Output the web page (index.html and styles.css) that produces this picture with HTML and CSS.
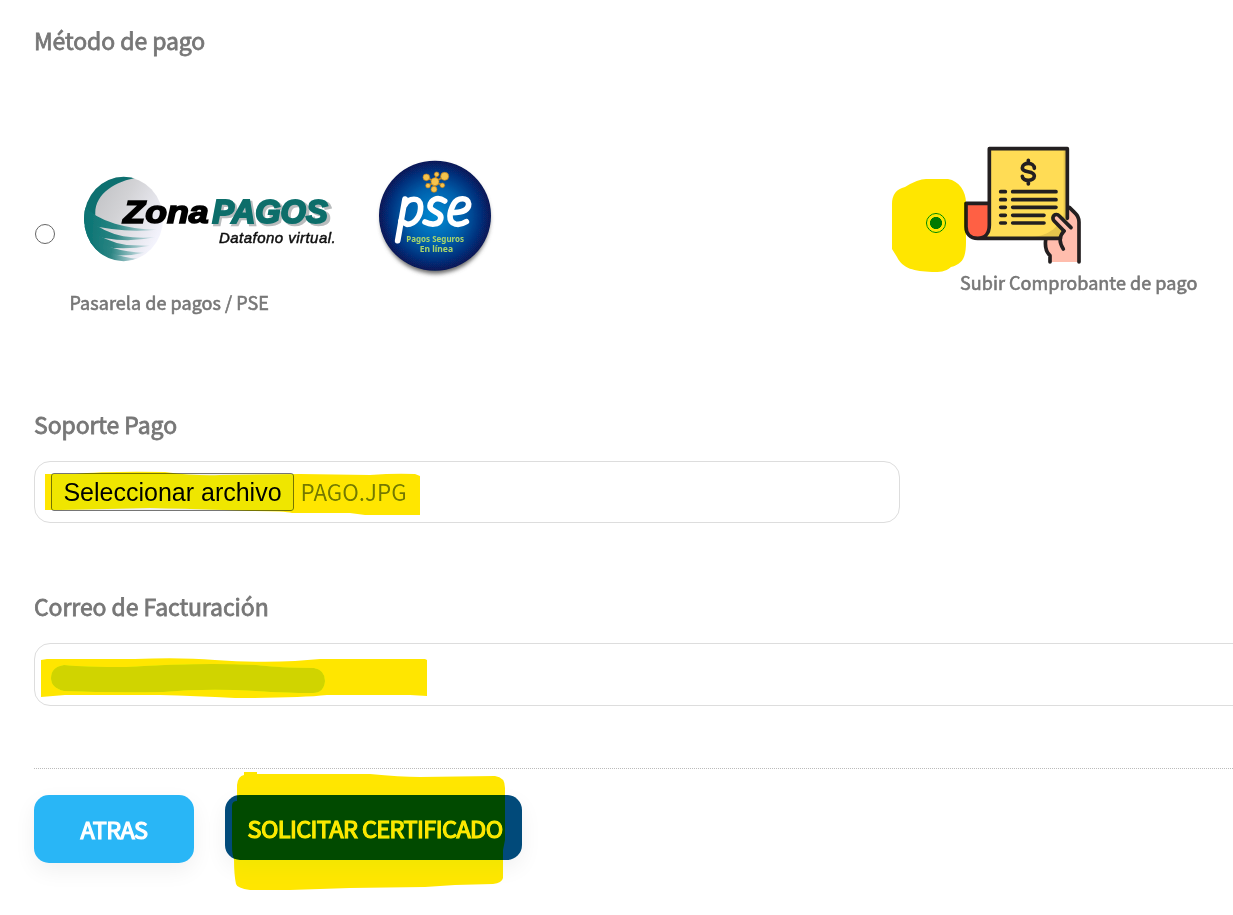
FILE: index.html
```html
<!DOCTYPE html>
<html lang="es">
<head>
<meta charset="utf-8">
<title>Método de pago</title>
<link rel="stylesheet" href="styles.css">
</head>
<body>
<main class="page">
  <h2 class="label">Método de pago</h2>
  <div class="methods">
    <label class="method method-gateway">
      <span class="radio"></span>
      <span class="method-body">
        <span class="logos">
          <svg class="zona" viewBox="180 70 801 282">
            <defs>
              <linearGradient id="ball" x1="0" y1="0" x2="1" y2="0.6"><stop offset="0" stop-color="#b9bbbe"/><stop offset=".5" stop-color="#d2d2d5"/><stop offset="1" stop-color="#f3f3fc"/></linearGradient>
              <linearGradient id="teal" x1="0" y1="0" x2="1" y2="0"><stop offset="0" stop-color="#067272"/><stop offset=".45" stop-color="#2b8583"/><stop offset="1" stop-color="#d9e5ec"/></linearGradient>
              <clipPath id="ballclip"><ellipse cx="311" cy="208" rx="119" ry="127"/></clipPath>
              <filter id="soft" x="-10%" y="-10%" width="120%" height="120%"><feGaussianBlur stdDeviation="2"/></filter>
              <filter id="edge"><feGaussianBlur stdDeviation="1.1"/></filter>
            </defs>
            <g filter="url(#soft)">
              <ellipse cx="311" cy="208" rx="118" ry="126" fill="url(#ball)"/>
              <g clip-path="url(#ballclip)" fill="url(#teal)">
                <path fill="#11706f" d="M355 84C285 92 222 135 226 195L185 220V76H355z"/>
                <path d="M190 165Q220 203 285 222Q340 238 410 240Q310 252 190 222z"/>
                <path d="M190 200Q250 249 310 260Q350 266 405 263Q300 285 190 250z"/>
                <path d="M190 228Q260 278 320 286L390 288Q290 307 200 280z"/>
                <path d="M194 252Q270 307 373 309Q290 328 215 306z"/>
                <path d="M205 274Q275 322 355 327L310 338Q250 332 212 310z"/>
              </g>
            </g>
            <g class="logo-bold" filter="url(#edge)">
              <text x="310" y="221" font-size="95" textLength="256" lengthAdjust="spacingAndGlyphs" stroke="#000" stroke-width="5">Zona</text>
              <text x="582" y="226" font-size="98" textLength="350" lengthAdjust="spacingAndGlyphs" fill="#b9bcbd" stroke="#b9bcbd" stroke-width="8">PAGOS</text>
              <text x="577" y="220" font-size="98" textLength="346" lengthAdjust="spacingAndGlyphs" fill="#086e6b" stroke="#086e6b" stroke-width="6">PAGOS</text>
              <text class="logo-light" x="597" y="280" font-size="45" textLength="350">Datafono virtual.</text>
            </g>
          </svg>
          <svg class="pse" viewBox="0 0 450 405">
            <defs>
              <radialGradient id="blue"><stop offset="0" stop-color="#008bd3"/><stop offset=".5" stop-color="#0060ac"/><stop offset=".82" stop-color="#06307c"/><stop offset="1" stop-color="#071756"/></radialGradient>
              <filter id="shadow" x="-20%" y="-20%" width="140%" height="140%"><feGaussianBlur stdDeviation="7"/></filter>
              <filter id="soft2"><feGaussianBlur stdDeviation="1.8"/></filter>
            </defs>
            <ellipse cx="226" cy="207" rx="163" ry="164" fill="#666" filter="url(#shadow)"/>
            <g filter="url(#soft2)">
              <ellipse cx="225" cy="197" rx="168" ry="165" fill="url(#blue)"/>
              <g stroke="#c78b20" stroke-width="5"><path d="M225 95L198 82M225 95L229 73M225 95L254 79M225 95L204 107M225 95L247 106M225 95L222 117"/></g>
              <g fill="#f5c44e" stroke="#bd7c18" stroke-width="2"><circle cx="225" cy="95" r="12"/><circle cx="199" cy="82" r="10"/><circle cx="230" cy="73" r="7"/><circle cx="254" cy="79" r="12"/><circle cx="204" cy="107" r="7"/><circle cx="247" cy="106" r="7"/><circle cx="222" cy="118" r="9"/></g>
              <g fill="none" stroke="#fff" stroke-width="17" stroke-linecap="round" stroke-linejoin="round">
                <path d="M135 147L113 272"/>
                <path d="M135 164C145 144 181 139 182 169C183 195 167 223 141 223L123 213"/>
                <path d="M254 153C232 138 212 149 210 168C208 187 248 184 242 207C237 227 210 224 195 216"/>
                <path d="M275 188C300 188 326 183 326 162C325 140 292 142 281 162C269 184 262 216 286 222C300 225 311 220 319 215"/>
              </g>
              <g class="pse-text" fill="#a8d56b" font-size="26"><text x="139" y="276" textLength="173" lengthAdjust="spacingAndGlyphs">Pagos Seguros</text><text x="179" y="307" textLength="100" lengthAdjust="spacingAndGlyphs">En línea</text></g>
            </g>
          </svg>
        </span>
        <span class="caption caption-gateway">Pasarela de pagos / PSE</span>
      </span>
    </label>
    <label class="method method-upload">
      <span class="radio radio-on"></span>
      <span class="method-body upload-body">
        <svg class="receipt" viewBox="252 33 354 354">
          <path fill="#ffbdad" d="M497 315Q493 345 510 362V381H597V249L568 217L548 230L540 285L548 288L543 315z"/>
          <path fill="#ffdc55" d="M328 41H562V250L552 289L541 310H300Q328 300 328 270z"/>
          <path fill="#e5c54c" d="M551 46H561V250L552 289L541 306H455C510 303 540 270 551 240z"/>
          <path fill="#ff6044" d="M258 205H328V270C328 298 312 310 293 310C270 310 258 295 258 275z"/>
          <g fill="none" stroke="#231f20" stroke-width="11" stroke-linecap="round" stroke-linejoin="round">
            <path d="M293 310C312 310 328 298 328 270V41H562V250M328 205H258V275C258 295 270 310 293 310H541"/>
            <path d="M362 170H376M398 170H528M362 194H376M398 194H528M362 217H376M398 217H528M362 241H376M398 241H492M362 264H376M398 264H492"/>
            <path d="M463 100C463 80 427 81 427 99C427 116 463 104 463 123C463 140 427 140 427 124M445 76V83M445 138V147"/>
            <path d="M568 217L584 233Q597 245 597 261V381M497 315Q493 345 510 362V381"/>
            <path fill="#ffbdad" d="M573 278L538 243C527 231 512 246 522 257L552 288"/>
            <path d="M552 288C536 305 539 325 550 342"/>
          </g>
        </svg>
        <span class="caption caption-upload">Subir Comprobante de pago</span>
      </span>
    </label>
  </div>
  <h2 class="label">Soporte Pago</h2>
  <div class="field field-file"><span class="file-button">Seleccionar archivo</span><span class="file-name">PAGO.JPG</span></div>
  <h2 class="label label-mail">Correo de Facturación</h2>
  <div class="field field-mail"><svg class="redaction" viewBox="0 0 275 32"><path d="M13 3Q35 5 75 5Q150 0 205 3Q230 6 263 6Q274 8 274 19Q273 31 262 31Q235 31 205 29Q155 26 112 30Q60 31 13 29Q0 26 0 16Q0 5 13 3Z"/></svg></div>
  <div class="actions">
    <div class="button button-back"><span>ATRAS</span></div>
    <div class="button button-send"><span>SOLICITAR CERTIFICADO</span></div>
  </div>
  <svg class="marker" viewBox="0 0 1233 915">
    <path d="M892 204Q892 190 905 187Q918 179 926 179H948C959 181 966 191 966 203V242C966 257 963 264 951 267C945 272 940 272 932 272C914 271 903 269 897 257L892 249Z"/>
    <path d="M45 474H75Q105 471 165 472Q195 476 220 475L300 474L370 475Q395 473 415 474L420 476V515H365L350 513H292Q285 511 250 511Q195 509 150 508Q110 509 60 510H45Z"/>
    <path d="M41 660L47 659H135Q180 657 215 660Q260 663 295 661L320 659H425L427 660V696L410 695H327Q300 698 235 698Q195 696 160 695H65L41 697Z"/>
    <path d="M237 785Q238 776 244 775V772H257V774H370Q400 777 420 777L495 776Q505 777 505 788V840L503 850V878Q502 883 493 884L455 885L425 887L350 888L290 890H250Q237 888 236 884Q234 875 234 859Q232 855 232 845V806Q232 801 237 801Z"/>
  </svg>
</main>
</body>
</html>
```
FILE: styles.css
```css
* { box-sizing: border-box; }
body { margin: 0; background: #fff; overflow: hidden; font-family: "Noto Sans CJK SC", "Noto Sans", sans-serif; color: #777; }
.page { position: relative; width: 1233px; height: 915px; padding: 23px 0 0 34px; overflow: hidden; background: #fff; }
.label { margin: 0; height: 36px; line-height: 35px; font-size: 23px; font-weight: 400; letter-spacing: -.08px; -webkit-text-stroke: .8px #777; white-space: nowrap; }
.methods { display: flex; height: 348px; padding-top: 1px; }
.method { display: flex; align-items: flex-start; }
.method-gateway { width: 892px; padding: 90px 0 0 1px; }
.radio { flex: none; width: 20px; height: 20px; border: 1px solid #666; border-radius: 50%; background: #fff; }
.method-gateway .radio { margin-top: 74px; }
.method-body { display: flex; flex-direction: column; }
.logos { display: flex; margin-left: 25px; }
.zona { width: 267px; height: 94px; margin-top: 23px; }
.pse { width: 150px; height: 135px; margin-left: 13px; }
.logo-bold { font-family: "Liberation Sans", sans-serif; font-weight: 700; font-style: italic; }
.logo-light { font-weight: 400; fill: #111; stroke: #111; stroke-width: 1.5px; }
.pse-text { font-family: "Noto Sans", sans-serif; font-weight: 700; }
.caption { font-size: 18px; line-height: 28px; white-space: nowrap; letter-spacing: .05px; -webkit-text-stroke: .6px #777; }
.caption-gateway { margin: 3px 0 0 14.5px; }
.method-upload { padding-top: 86px; }
.radio-on { margin-top: 67px; border-color: #007b00; background: radial-gradient(circle, #007b00 0 5.7px, #fff 6.4px); }
.upload-body { margin-left: 14px; }
.receipt { width: 118px; height: 118px; margin-left: 4px; }
.caption-upload { margin-top: 4px; }
.field { border: 1px solid #ddd; border-radius: 16px; }
.field-file { display: flex; align-items: flex-start; width: 866px; height: 62px; margin-top: 18px; padding: 11px 16px; }
.file-button { width: 243px; height: 38px; border: 1px solid #757575; border-radius: 3px; background: #efefef; color: #000; font: 25px/37px "Liberation Sans", sans-serif; text-align: center; white-space: nowrap; }
.file-name { margin-left: 6.5px; font-size: 22.4px; line-height: 37px; }
.label-mail { margin-top: 66px; }
.field-mail { width: 1300px; height: 63px; margin-top: 18px; padding: 18px 16px; }
.redaction { display: block; width: 275px; height: 32px; fill: #d0d4d0; }
.actions { display: flex; align-items: flex-start; gap: 31px; margin-top: 62px; padding-top: 26px; border-top: 1px dotted #bbb; }
.button { display: flex; align-items: center; justify-content: center; border-radius: 15px; color: #fff; font-size: 23.5px; letter-spacing: -.6px; -webkit-text-stroke: 1.2px #fff; box-shadow: 0 8px 22px rgba(0,0,0,.06); white-space: nowrap; }
.button-back { width: 160px; height: 68px; padding-bottom: 1px; background: #29b6f6; }
.button-send { width: 297px; height: 65px; padding: 1px 0 0 3px; background: #014a7a; }
.marker { position: absolute; left: 0; top: 0; width: 1233px; height: 915px; fill: #ffe600; mix-blend-mode: darken; pointer-events: none; }
```
